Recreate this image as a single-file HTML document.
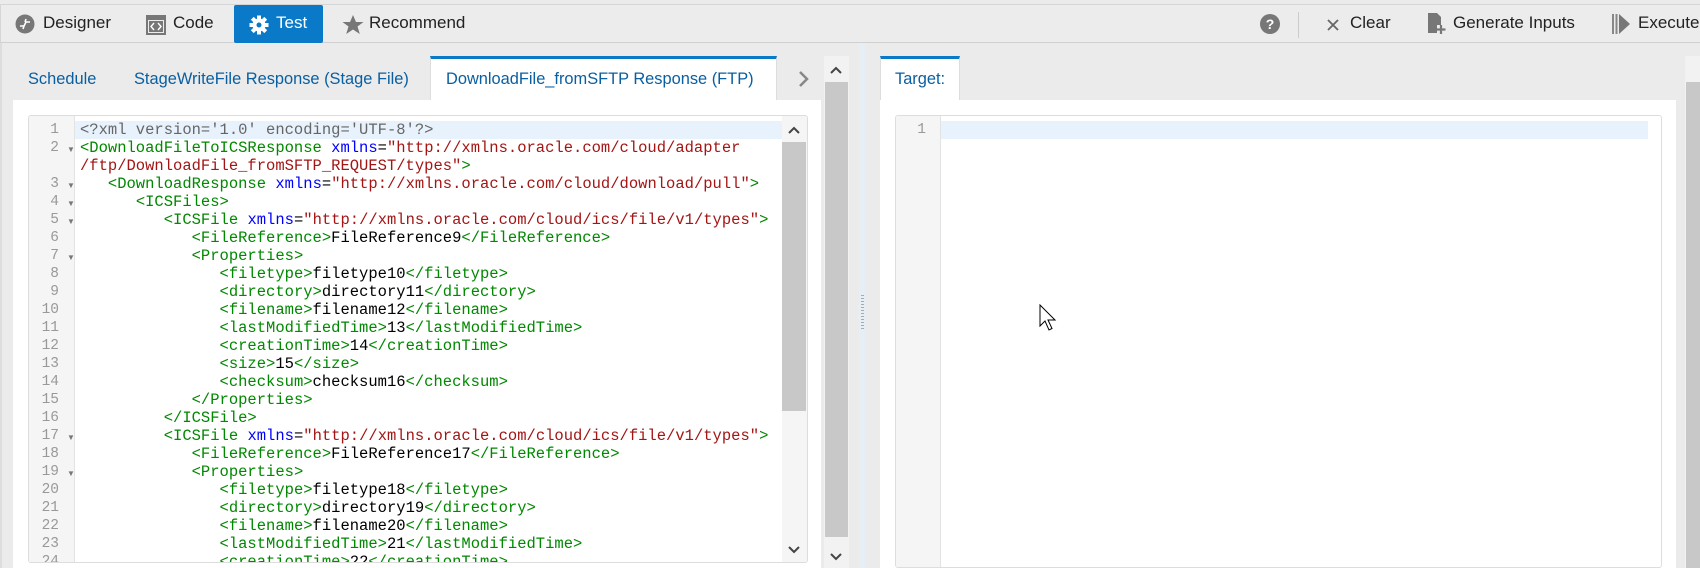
<!DOCTYPE html><html><head><meta charset="utf-8"><style>
*{box-sizing:border-box;margin:0;padding:0}
body{width:1700px;height:568px;overflow:hidden;background:#ebebeb;font-family:"Liberation Sans",sans-serif;position:relative}
.a{position:absolute}
.tb{left:0;top:4px;width:1700px;height:39px;background:#ececec;border-top:1px solid #d6d6d6;border-bottom:1px solid #d0d0d0;border-left:1px solid #d6d6d6}
.tt{font-size:17px;color:#222;top:13px}
.tab{font-size:16.4px;color:#0a5fa0;top:70px}
.code{font-family:"Liberation Mono",monospace;font-size:15.5px;line-height:18px;white-space:pre}
.g{color:#080}.b{color:#00f}.r{color:#a31515}.k{color:#000}.p{color:#666}
.ln{color:#999;text-align:right;width:30px}
.f{position:absolute;left:38px;font-size:8px;color:#777}
</style></head><body>
<div class="a tb"></div>
<svg class="a" style="left:15px;top:14px" width="20" height="20" viewBox="0 0 20 20"><circle cx="10" cy="10" r="9.5" fill="#777"/><path d="M5 12h4l2-4h4M11 5l-1 3M9 12l-1 3" stroke="#fff" stroke-width="1.6" fill="none"/></svg>
<div class="a tt" style="left:43px">Designer</div>
<svg class="a" style="left:146px;top:15px" width="20" height="20" viewBox="0 0 20 20"><rect x="0" y="0" width="20" height="20" fill="#777"/><rect x="2" y="5" width="16" height="13" fill="#ececec"/><rect x="3" y="6" width="14" height="11" fill="#777"/><path d="M8 8l-3 3.5 3 3.5M12 8l3 3.5-3 3.5" stroke="#fff" stroke-width="1.4" fill="none"/></svg>
<div class="a tt" style="left:173px">Code</div>
<div class="a" style="left:234px;top:5px;width:89px;height:38px;background:#0a7ac8;border-radius:2px"></div>
<svg class="a" style="left:249px;top:15px" width="20" height="20" viewBox="0 0 20 20"><g fill="#fff"><circle cx="10" cy="10" r="6.5"/><rect x="8" y="0.5" width="4" height="19"/><rect x="0.5" y="8" width="19" height="4"/><rect x="8" y="0.5" width="4" height="19" transform="rotate(45 10 10)"/><rect x="8" y="0.5" width="4" height="19" transform="rotate(-45 10 10)"/></g><circle cx="10" cy="10" r="2.5" fill="#0a7ac8"/></svg>
<div class="a tt" style="left:276px;color:#fff">Test</div>
<svg class="a" style="left:342px;top:14px" width="22" height="22" viewBox="0 0 22 22"><path d="M11 1l3 7h7.5l-6 4.5 2.3 7.5L11 15.5 4.2 20l2.3-7.5-6-4.5H8z" fill="#777"/></svg>
<div class="a tt" style="left:369px">Recommend</div>
<svg class="a" style="left:1260px;top:14px" width="20" height="20" viewBox="0 0 20 20"><circle cx="10" cy="10" r="10" fill="#777"/><text x="10" y="15" font-family="Liberation Sans" font-weight="bold" font-size="14" fill="#fff" text-anchor="middle">?</text></svg>
<div class="a" style="left:1298px;top:12px;width:1px;height:26px;background:#ccc"></div>
<svg class="a" style="left:1327px;top:19px" width="12" height="12" viewBox="0 0 12 12"><path d="M1 1l10 10M11 1L1 11" stroke="#666" stroke-width="1.8"/></svg>
<div class="a tt" style="left:1350px">Clear</div>
<svg class="a" style="left:1428px;top:13px" width="18" height="22" viewBox="0 0 18 22"><path d="M0 0h9l4 4v8H9v8H0z" fill="#777"/><path d="M13 12v9M8.5 16.5h9" stroke="#777" stroke-width="2.2"/></svg>
<div class="a tt" style="left:1453px">Generate Inputs</div>
<svg class="a" style="left:1612px;top:13px" width="20" height="22" viewBox="0 0 20 22"><rect x="0" y="1" width="2" height="20" fill="#888"/><rect x="3.5" y="1" width="2" height="20" fill="#888"/><path d="M7 1l11 10L7 21z" fill="#777"/></svg>
<div class="a tt" style="left:1638px">Execute</div>

<div class="a" style="left:0;top:43px;width:2px;height:525px;background:#ddd"></div>
<div class="a tab" style="left:28px">Schedule</div>
<div class="a tab" style="left:134px">StageWriteFile Response (Stage File)</div>
<div class="a" style="left:430px;top:56px;width:347px;height:45px;background:#fff;border-top:3px solid #0a7ac8;border-left:1px solid #ddd;border-right:1px solid #ddd"></div>
<div class="a tab" style="left:446px">DownloadFile_fromSFTP Response (FTP)</div>
<svg class="a" style="left:797px;top:70px" width="14" height="18" viewBox="0 0 14 18"><path d="M3 2l7 7-7 7" stroke="#888" stroke-width="2.5" fill="none"/></svg>
<div class="a" style="left:13px;top:100px;width:808px;height:468px;background:#fff"></div>
<div class="a" style="left:28px;top:115px;width:780px;height:448px;border:1px solid #ddd;border-radius:3px;background:#fff;overflow:hidden">
 <div class="a" style="left:0;top:0;width:46px;height:448px;background:#f5f5f5;border-right:1px solid #e3e3e3"></div>
 <div class="a" style="left:46px;top:5px;width:707px;height:18px;background:#e8f2fc"></div>
 <div class="a code ln" style="left:0;top:5px;font-size:14.5px">1
2

3
4
5
6
7
8
9
10
11
12
13
14
15
16
17
18
19
20
21
22
23
24</div>
 <div class="f" style="top:29px">▼</div><div class="f" style="top:65px">▼</div><div class="f" style="top:83px">▼</div><div class="f" style="top:101px">▼</div><div class="f" style="top:137px">▼</div><div class="f" style="top:317px">▼</div><div class="f" style="top:353px">▼</div>
 <div class="a code" style="left:51px;top:5px"><span class="p">&lt;?xml version='1.0' encoding='UTF-8'?&gt;</span>
<span class="g">&lt;DownloadFileToICSResponse</span> <span class="b">xmlns</span>=<span class="r">"http://xmlns.oracle.com/cloud/adapter</span>
<span class="r">/ftp/DownloadFile_fromSFTP_REQUEST/types"</span><span class="g">&gt;</span>
   <span class="g">&lt;DownloadResponse</span> <span class="b">xmlns</span>=<span class="r">"http://xmlns.oracle.com/cloud/download/pull"</span><span class="g">&gt;</span>
      <span class="g">&lt;ICSFiles&gt;</span>
         <span class="g">&lt;ICSFile</span> <span class="b">xmlns</span>=<span class="r">"http://xmlns.oracle.com/cloud/ics/file/v1/types"</span><span class="g">&gt;</span>
            <span class="g">&lt;FileReference&gt;</span>FileReference9<span class="g">&lt;/FileReference&gt;</span>
            <span class="g">&lt;Properties&gt;</span>
               <span class="g">&lt;filetype&gt;</span>filetype10<span class="g">&lt;/filetype&gt;</span>
               <span class="g">&lt;directory&gt;</span>directory11<span class="g">&lt;/directory&gt;</span>
               <span class="g">&lt;filename&gt;</span>filename12<span class="g">&lt;/filename&gt;</span>
               <span class="g">&lt;lastModifiedTime&gt;</span>13<span class="g">&lt;/lastModifiedTime&gt;</span>
               <span class="g">&lt;creationTime&gt;</span>14<span class="g">&lt;/creationTime&gt;</span>
               <span class="g">&lt;size&gt;</span>15<span class="g">&lt;/size&gt;</span>
               <span class="g">&lt;checksum&gt;</span>checksum16<span class="g">&lt;/checksum&gt;</span>
            <span class="g">&lt;/Properties&gt;</span>
         <span class="g">&lt;/ICSFile&gt;</span>
         <span class="g">&lt;ICSFile</span> <span class="b">xmlns</span>=<span class="r">"http://xmlns.oracle.com/cloud/ics/file/v1/types"</span><span class="g">&gt;</span>
            <span class="g">&lt;FileReference&gt;</span>FileReference17<span class="g">&lt;/FileReference&gt;</span>
            <span class="g">&lt;Properties&gt;</span>
               <span class="g">&lt;filetype&gt;</span>filetype18<span class="g">&lt;/filetype&gt;</span>
               <span class="g">&lt;directory&gt;</span>directory19<span class="g">&lt;/directory&gt;</span>
               <span class="g">&lt;filename&gt;</span>filename20<span class="g">&lt;/filename&gt;</span>
               <span class="g">&lt;lastModifiedTime&gt;</span>21<span class="g">&lt;/lastModifiedTime&gt;</span>
               <span class="g">&lt;creationTime&gt;</span>22<span class="g">&lt;/creationTime&gt;</span></div>
 <div class="a" style="left:753px;top:0;width:26px;height:448px;background:#f5f5f5"></div>
 <div class="a" style="left:753px;top:26px;width:24px;height:269px;background:#c8c8c8"></div>
 <svg class="a" style="left:759px;top:9px" width="12" height="10" viewBox="0 0 12 10"><path d="M1 8l5-5 5 5" stroke="#444" stroke-width="2" fill="none"/></svg>
 <svg class="a" style="left:759px;top:429px" width="12" height="10" viewBox="0 0 12 10"><path d="M1 2l5 5 5-5" stroke="#444" stroke-width="2" fill="none"/></svg>
</div>
<div class="a" style="left:824px;top:56px;width:25px;height:512px;background:#f2f2f2"></div>
<div class="a" style="left:825px;top:82px;width:23px;height:455px;background:#c8c8c8"></div>
<svg class="a" style="left:830px;top:65px" width="12" height="10" viewBox="0 0 12 10"><path d="M1 8l5-5 5 5" stroke="#444" stroke-width="2" fill="none"/></svg>
<svg class="a" style="left:830px;top:552px" width="12" height="10" viewBox="0 0 12 10"><path d="M1 2l5 5 5-5" stroke="#444" stroke-width="2" fill="none"/></svg>
<div class="a" style="left:859px;top:43px;width:6px;height:525px;background:#e6eef6"></div>
<div class="a" style="left:861px;top:295px;width:3px;height:36px;background:repeating-linear-gradient(#aaa 0 1px,transparent 1px 3px)"></div>
<div class="a" style="left:880px;top:56px;width:80px;height:45px;background:#fff;border-top:3px solid #0a7ac8;border-left:1px solid #ddd;border-right:1px solid #ddd"></div>
<div class="a tab" style="left:895px">Target:</div>
<div class="a" style="left:880px;top:100px;width:796px;height:468px;background:#fff"></div>
<div class="a" style="left:895px;top:115px;width:767px;height:453px;border:1px solid #ddd;border-radius:3px;overflow:hidden">
 <div class="a" style="left:0;top:0;width:45px;height:453px;background:#f5f5f5;border-right:1px solid #e3e3e3"></div>
 <div class="a" style="left:45px;top:5px;width:707px;height:18px;background:#e8f2fc"></div>
 <div class="a code ln" style="left:0;top:5px;width:30px;font-size:14.5px">1</div>
</div>
<div class="a" style="left:1685px;top:56px;width:15px;height:512px;background:#f2f2f2"></div>
<div class="a" style="left:1686px;top:82px;width:14px;height:486px;background:#c8c8c8"></div>
<svg class="a" style="left:1039px;top:304px" width="20" height="28" viewBox="0 0 20 28"><path d="M1 1v21l5-5 4 9 3-1.5-4-8.5h7z" fill="#fff" stroke="#000" stroke-width="1"/></svg>
</body></html>
